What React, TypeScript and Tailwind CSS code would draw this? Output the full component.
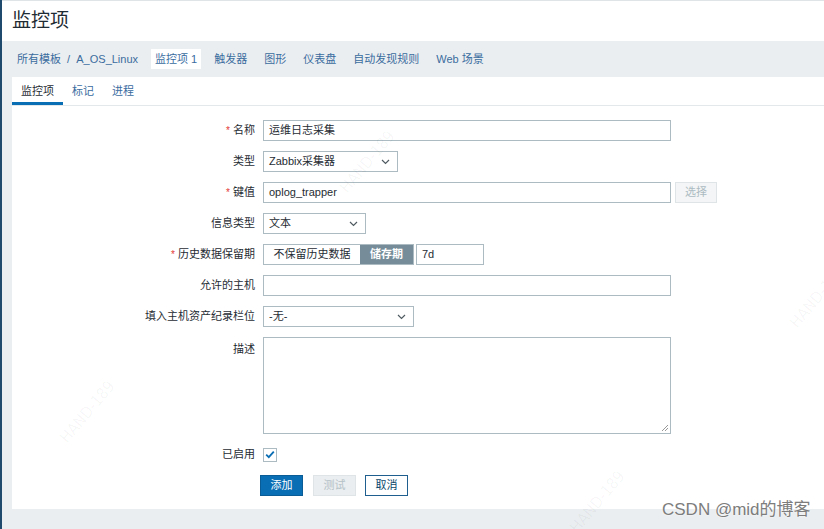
import React from "react";

function Chevron() {
  return (
    <svg width="9" height="6" viewBox="0 0 9 6" className="shrink-0">
      <path d="M1 1 L4.5 4.5 L8 1" fill="none" stroke="#4f5b61" strokeWidth="1.2" />
    </svg>
  );
}

function Select({ w, value }: { w: string; value: string }) {
  return (
    <div className={`${w} flex h-[21px] items-center justify-between border border-[#acbbc2] bg-white pl-[5px] pr-[7px]`}>
      <span>{value}</span>
      <Chevron />
    </div>
  );
}

function Input({ w, value }: { w: string; value?: string }) {
  return (
    <div className={`${w} flex h-[21px] items-center border border-[#acbbc2] bg-white pl-[5px]`}>
      {value}
    </div>
  );
}

function Label({ text, req }: { text: string; req?: boolean }) {
  return (
    <div className="flex h-[21px] items-center justify-end">
      {req && <span className="mr-[3px] text-[10px] text-[#e33734]">*</span>}
      <span>{text}</span>
    </div>
  );
}

function Mark({ x, y }: { x: number; y: number }) {
  return (
    <div
      className="pointer-events-none absolute -rotate-[50deg] whitespace-nowrap font-['DejaVu_Sans_Condensed',sans-serif] text-[16px] text-[#000]/[0.04]"
      style={{ left: x, top: y }}
    >
      HAND-189
    </div>
  );
}

export default function App() {
  return (
    <div className="relative flex h-[529px] w-[824px] overflow-hidden bg-[#ebeef0] font-['Liberation_Sans','Noto_Sans_CJK_SC',sans-serif] text-[11px] text-[#1f2c33]">
      <div className="w-[2px] shrink-0 bg-[#1f4a6e]" />
      <div className="flex min-w-0 flex-1 flex-col">
        <header className="flex h-[41px] items-center border-t border-[#dfe4e7] bg-white pl-[10px] text-[19px]">
          监控项
        </header>
        <nav className="flex h-[36px] items-center gap-[9px] pl-[11px] text-[11px] text-[#3a6c9f]">
          <span className="px-[4px]">所有模板&nbsp;&nbsp;/&nbsp;&nbsp;A_OS_Linux</span>
          <span className="bg-white px-[4px] py-[2px] text-[#3a6c9f]">监控项 1</span>
          <span className="px-[4px]">触发器</span>
          <span className="px-[4px]">图形</span>
          <span className="px-[4px]">仪表盘</span>
          <span className="px-[4px]">自动发现规则</span>
          <span className="px-[4px]">Web 场景</span>
        </nav>
        <div className="ml-[10px] flex h-[432px] flex-col bg-white">
          <div className="flex h-[29px] border-b border-[#e3e8eb]">
            <div className="flex items-center border-b-[3px] border-[#0a6eb4] px-[9px] pt-[3px]">监控项</div>
            <div className="flex items-center px-[9px] text-[#3a6c9f]">标记</div>
            <div className="flex items-center px-[9px] text-[#3a6c9f]">进程</div>
          </div>
          <div className="grid grid-cols-[243px_1fr] gap-x-[8px] gap-y-[10px] pt-[14px]">
            <Label text="名称" req />
            <Input w="w-[408px]" value="运维日志采集" />

            <Label text="类型" />
            <Select w="w-[135px]" value="Zabbix采集器" />

            <Label text="键值" req />
            <div className="flex gap-[4px]">
              <Input w="w-[408px]" value="oplog_trapper" />
              <div className="flex h-[21px] w-[42px] items-center justify-center border border-[#dfe4e7] bg-[#f4f5f6] text-[#acbbc2]">
                选择
              </div>
            </div>

            <Label text="信息类型" />
            <Select w="w-[103px]" value="文本" />

            <Label text="历史数据保留期" req />
            <div className="flex gap-[2px]">
              <div className="flex h-[21px] border border-[#acbbc2]">
                <div className="flex w-[96px] items-center justify-center bg-white">不保留历史数据</div>
                <div className="flex w-[53px] items-center justify-center bg-[#768d99] font-bold text-white">储存期</div>
              </div>
              <Input w="w-[68px]" value="7d" />
            </div>

            <Label text="允许的主机" />
            <Input w="w-[408px]" />

            <Label text="填入主机资产纪录栏位" />
            <Select w="w-[151px]" value="-无-" />

            <div className="flex justify-end pt-[4px]">描述</div>
            <div className="relative h-[97px] w-[408px] border border-[#acbbc2] bg-white">
              <svg width="8" height="8" viewBox="0 0 8 8" className="absolute bottom-[1px] right-[1px]">
                <path d="M7 1 L1 7 M7 4 L4 7" stroke="#999" strokeWidth="1" />
              </svg>
            </div>

            <Label text="已启用" />
            <div className="flex h-[21px] items-center">
              <div className="flex h-[14px] w-[14px] items-center justify-center border border-[#acbbc2] bg-white">
                <svg width="10" height="9" viewBox="0 0 10 9">
                  <path d="M1.2 4.6 L3.8 7.2 L8.8 1.6" fill="none" stroke="#0a6eb4" strokeWidth="1.8" />
                </svg>
              </div>
            </div>

            <div />
            <div className="-ml-[3px] flex h-[21px] gap-[10px]">
              <div className="flex w-[43px] items-center justify-center border border-[#0a5c96] bg-[#0a6eb4] text-white">添加</div>
              <div className="flex w-[43px] items-center justify-center border border-[#dfe4e7] bg-[#ebeef0] text-[#b5c2c8]">测试</div>
              <div className="ml-[-1px] flex w-[43px] items-center justify-center border border-[#1f5f8f] bg-white text-[#0a466a]">取消</div>
            </div>
          </div>
        </div>
      </div>
      <Mark x={330} y={150} />
      <Mark x={50} y={400} />
      <Mark x={780} y={285} />
      <Mark x={560} y={490} />
      <div className="pointer-events-none absolute left-[662px] top-[497px] whitespace-nowrap font-['Liberation_Sans','Noto_Sans_CJK_SC',sans-serif] text-[17px] text-[#7d7d7d] [text-shadow:0_0_2px_#fff]">
        CSDN @mid的博客
      </div>
    </div>
  );
}
